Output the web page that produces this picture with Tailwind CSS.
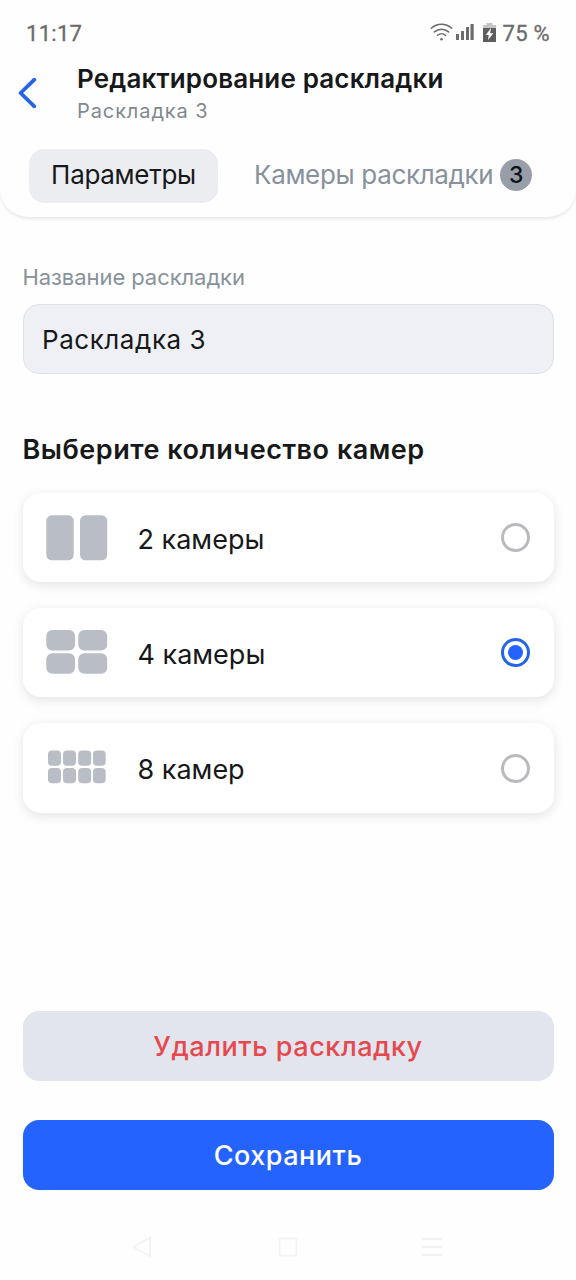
<!DOCTYPE html>
<html lang="ru">
<head>
<meta charset="utf-8">
<title>Редактирование раскладки</title>
<script src="https://cdn.jsdelivr.net/npm/@tailwindcss/browser@4"></script>
</head>
<body class="w-[576px] h-[1280px] overflow-hidden bg-[#fefefe] font-['Inter','Noto_Sans',sans-serif] text-[#17181a] flex flex-col whitespace-nowrap">
  <header class="h-[217px] shrink-0 bg-[#fefefe] rounded-b-[28px] shadow-[0_2px_3px_rgba(0,0,0,0.09)] flex flex-col">
    <div class="h-[66px] pl-[26px] pr-[26px] flex items-center justify-between font-['Roboto',sans-serif] text-[22px] text-[#6b6b6b]">
      <span class="tracking-[0.3px] [-webkit-text-stroke:0.3px_#6b6b6b]">11:17</span>
      <div class="flex items-center">
        <svg class="w-[23px] h-[20px] mr-[3px]" viewBox="0 0 23 20" fill="none" stroke="#6b6b6b" stroke-width="1.5" stroke-linecap="round"><path d="M1.3 5.2C7.2-.1 15.8-.1 21.7 5.200M4.4 8.900C8.5 5.300 14.5 5.300 18.6 8.900M7.5 12.300C9.800 10.200 13.200 10.200 15.500 12.300"/><circle cx="11.5" cy="16.200" r="1.3" fill="#6b6b6b" stroke="none"/></svg>
        <svg class="w-[18px] h-[18px] mr-[9px]" viewBox="0 0 18 18" fill="#6b6b6b"><path d="M0 10h3v6H0zM5 7h3v9H5zM10 3h3v13h-3zM14.500 0h3.200v16h-3.200z"/></svg>
        <svg class="w-[13px] h-[20px] mr-[7px]" viewBox="0 0 13 20"><path d="M3.5 0h6v2H13v4H0V2h3.500z" fill="#c4c4c4"/><path d="M0 5h13v14H0z" fill="#5e5e5e"/><path d="M8 5 2.800 12h3L5 17l5.300-6.800H7.200z" fill="#fff"/></svg>
        <span class="tracking-[0.3px] [-webkit-text-stroke:0.3px_#6b6b6b]">75 %</span>
      </div>
    </div>
    <div class="h-[69px] flex pl-[18px]">
      <svg class="w-[20px] h-[32px] mt-[11px] mr-[39px]" viewBox="0 0 20 32" fill="none" stroke="#2563eb" stroke-width="3.800" stroke-linecap="round" stroke-linejoin="round"><path d="M16.300 2.700 2.600 16l13.700 13.300"/></svg>
      <div class="flex flex-col">
        <h1 class="-mt-px text-[26px] leading-[28px] font-semibold tracking-[0.15px]">Редактирование раскладки</h1>
        <p class="text-[20px] leading-[24px] mt-[6px] tracking-[0.9px] text-[#82898e]">Раскладка 3</p>
      </div>
    </div>
    <nav class="flex items-center mt-[14px] pl-[29px] text-[26px] leading-[30px]">
      <div class="w-[189px] h-[54px] rounded-[15px] bg-[#ecedf1] flex items-center justify-center pb-[2px] tracking-[-0.3px]">Параметры</div>
      <div class="flex items-center ml-[36px] pb-[2px] text-[#87919b] tracking-[-0.33px]"><span>Камеры раскладки</span>
        <span class="ml-[7px] w-[32px] h-[32px] rounded-full bg-[#989ea8] text-[#101216] font-medium text-[23px] pr-[1px] flex items-center justify-center">3</span></div>
    </nav>
  </header>
  <main class="px-[22.500px] flex flex-col">
    <label class="mt-[46px] text-[22px] leading-[28px] tracking-[-0.07px] text-[#87929b]">Название раскладки</label>
    <div class="mt-[13px] h-[70px] rounded-[16px] border-[1.500px] border-[#dfe1e7] bg-[#eff0f5] pl-[18.500px] flex items-center text-[26px] tracking-[0.55px]">Раскладка 3</div>
    <h2 class="mt-[60px] text-[27px] leading-[32px] font-semibold tracking-[0.52px]">Выберите количество камер</h2>
    <div class="mt-[26.500px] flex flex-col gap-[26px] text-[27px]">
      <div class="h-[89.500px] rounded-[18px] bg-white shadow-[0_3px_12px_rgba(0,0,0,0.11)] flex items-center pl-[23.500px] pr-[23.500px]">
        <svg class="w-[62px] h-[46px] mt-[1px]" viewBox="0 0 62 46" fill="#b9bdc5"><rect x=".3" y=".3" width="27.400" height="45" rx="5.500"/><rect x="34" y=".3" width="27.200" height="45" rx="5.500"/></svg>
        <span class="ml-[29.500px] mt-[5px]">2 камеры</span>
        <span class="ml-auto w-[29px] h-[29px] rounded-full border-3 border-[#b8babd]"></span>
      </div>
      <div class="h-[89px] rounded-[18px] bg-white shadow-[0_3px_12px_rgba(0,0,0,0.11)] flex items-center pl-[23.500px] pr-[23.500px]">
        <svg class="w-[62px] h-[46px] -mt-[1px]" viewBox="0 0 62 46" fill="#b9bdc5"><rect x=".3" y="1" width="28.700" height="20.400" rx="6"/><rect x="32.300" y="1" width="28.900" height="20.400" rx="6"/><rect x=".3" y="24.300" width="28.700" height="20.400" rx="6"/><rect x="32.300" y="24.300" width="28.900" height="20.400" rx="6"/></svg>
        <span class="ml-[29.500px] mt-[5px]">4 камеры</span>
        <span class="ml-auto w-[29px] h-[29px] rounded-full border-3 border-[#2563eb] flex items-center justify-center"><span class="w-[15px] h-[15px] rounded-full bg-[#2563ff]"></span></span>
      </div>
      <div class="h-[90px] rounded-[18px] bg-white shadow-[0_3px_12px_rgba(0,0,0,0.11)] flex items-center pl-[23.500px] pr-[23.500px]">
        <svg class="w-[62px] h-[46px]" viewBox="0 0 62 46" fill="#b9bdc5"><rect x="2" y="5.500" width="13" height="15.300" rx="4"/><rect x="17" y="5.500" width="13" height="15.300" rx="4"/><rect x="32.200" y="5.500" width="13" height="15.300" rx="4"/><rect x="47" y="5.500" width="12.700" height="15.300" rx="4"/><rect x="2" y="23" width="13" height="15.300" rx="4"/><rect x="17" y="23" width="13" height="15.300" rx="4"/><rect x="32.200" y="23" width="13" height="15.300" rx="4"/><rect x="47" y="23" width="12.700" height="15.300" rx="4"/></svg>
        <span class="ml-[29.500px] mt-[5px]">8 камер</span>
        <span class="ml-auto w-[29px] h-[29px] rounded-full border-3 border-[#b8babd]"></span>
      </div>
    </div>
    <button class="mt-[198px] h-[70px] pt-[2px] rounded-[16px] bg-[#e2e5ee] text-[#e5484d] text-[27px] font-medium tracking-[0.55px]">Удалить раскладку</button>
    <button class="mt-[39px] h-[70px] pt-[2px] rounded-[16px] bg-[#2563ff] text-white text-[27px] font-medium tracking-[0.5px]">Сохранить</button>
  </main>
  <footer class="mt-[46px] pl-[132px] pr-[134px] flex items-center justify-between">
    <svg class="w-[21px] h-[22px]" viewBox="0 0 21 22" fill="none" stroke="#f3f3f3" stroke-width="2" stroke-linejoin="round"><path d="M18 1.500v19L1.500 11z"/></svg>
    <svg class="w-[20px] h-[20px]" viewBox="0 0 20 20" fill="none" stroke="#f3f3f3" stroke-width="2"><rect x="1.500" y="1.500" width="17" height="17" rx="1.500"/></svg>
    <svg class="w-[20px] h-[20px]" viewBox="0 0 20 20" stroke="#f1f1f1" stroke-width="2"><path d="M0 2h20M0 10h20M0 18h20"/></svg>
  </footer>
</body>
</html>
